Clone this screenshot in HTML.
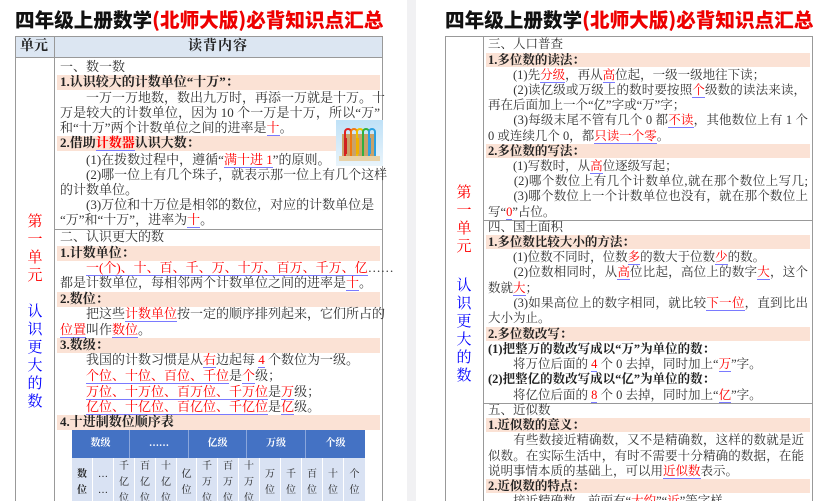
<!DOCTYPE html>
<html><head><meta charset="utf-8"><style>
*{margin:0;padding:0;box-sizing:border-box}
body{width:830px;height:501px;overflow:hidden;background:#fff;font-family:"Liberation Serif","Noto Serif CJK SC","Noto Sans CJK SC",serif;color:#333;position:relative}
.pg{position:absolute;top:0;height:501px;background:#fff;overflow:hidden}
.t{position:absolute;font-family:"Noto Sans CJK SC",sans-serif;font-weight:900;font-size:19.6px;line-height:22px;white-space:nowrap;color:#111}
.t b{color:#e00;font-weight:900}
.l{position:absolute;white-space:nowrap}
.j{text-align:justify;text-align-last:justify}
.h{position:absolute;background:#fbe2d5}
.r{color:#f00;border-bottom:1px solid #7a7aff}
.k{font-weight:bold;color:#222}
.vb{position:absolute;background:#999}
.u{position:absolute;font-size:15px;line-height:18px;width:20px;text-align:center}
.L .l{font-size:13px;line-height:16px}
.R .l{font-size:12.5px;line-height:15.3px}
</style></head><body>
<div style="position:absolute;left:407px;top:0;width:9px;height:501px;background:#f1f1f3"></div>

<!-- LEFT PAGE -->
<div class="pg" style="left:0;width:407px">
<div class="t" style="left:15px;top:8px">四年级上册数学<b>(北师大版)必背知识点汇总</b></div>
<div style="position:absolute;left:15px;top:36px;width:368px;height:22px;background:#dce6f2;border:1px solid #999"></div>
<div class="vb" style="left:15px;top:36px;width:1px;height:465px"></div>
<div class="vb" style="left:54px;top:36px;width:1px;height:465px"></div>
<div class="vb" style="left:382px;top:36px;width:1px;height:465px"></div>
<div class="vb" style="left:55px;top:229px;width:327px;height:1px"></div>
<div class="l k" style="left:20px;top:38px;font-size:14px;line-height:18px">单元</div>
<div class="l k" style="left:188px;top:38px;font-size:14px;line-height:18px;letter-spacing:1px">读背内容</div>
<div class="u" style="left:25px;top:213px;color:#f00">第<br>一<br>单<br>元</div>
<div class="u" style="left:25px;top:303px;color:#00f">认<br>识<br>更<br>大<br>的<br>数</div>

<div class="h" style="left:57px;top:75px;width:323px;height:15px"></div>
<div class="h" style="left:57px;top:136px;width:280px;height:15px"></div>
<div class="h" style="left:57px;top:246px;width:323px;height:15px"></div>
<div class="h" style="left:57px;top:292px;width:323px;height:15px"></div>
<div class="h" style="left:57px;top:338px;width:323px;height:15px"></div>
<div class="h" style="left:57px;top:415px;width:323px;height:15px"></div>

<div class="L">
<div class="l" style="left:60px;top:59px">一、数一数</div>
<div class="l k" style="left:60px;top:74px">1.认识较大的计数单位“十万”：</div>
<div class="l j" style="left:60px;top:90px;width:320px">　　一万一万地数，数出九万时，再添一万就是十万。十</div>
<div class="l j" style="left:60px;top:105px;width:320px">万是较大的计数单位，因为 10 个一万是十万，所以“万”</div>
<div class="l" style="left:60px;top:120px">和“十万”两个计数单位之间的进率是<span class="r">十</span>。</div>
<div class="l k" style="left:60px;top:135px">2.借助<span class="r">计数器</span>认识大数：</div>
<div class="l" style="left:60px;top:152px">　　(1)在拨数过程中，遵循“<span class="r">满十进 1</span>”的原则。</div>
<div class="l j" style="left:60px;top:167px;width:320px">　　(2)哪一位上有几个珠子，就表示那一位上有几个这样</div>
<div class="l" style="left:60px;top:182px">的计数单位。</div>
<div class="l j" style="left:60px;top:197px;width:307px">　　(3)万位和十万位是相邻的数位，对应的计数单位是</div>
<div class="l" style="left:60px;top:212px">“万”和“十万”，进率为<span class="r">十</span>。</div>
<div class="l" style="left:60px;top:229px">二、认识更大的数</div>
<div class="l k" style="left:60px;top:245px">1.计数单位：</div>
<div class="l" style="left:60px;top:260px">　　<span class="r">一(个)、十、百、千、万、十万、百万、千万、亿</span>……</div>
<div class="l" style="left:60px;top:275px">都是计数单位，每相邻两个计数单位之间的进率是<span class="r">十</span>。</div>
<div class="l k" style="left:60px;top:291px">2.数位：</div>
<div class="l j" style="left:60px;top:306px;width:315px">　　把这些<span class="r">计数单位</span>按一定的顺序排列起来，它们所占的</div>
<div class="l" style="left:60px;top:322px"><span class="r">位置</span>叫作<span class="r">数位</span>。</div>
<div class="l k" style="left:60px;top:337px">3.数级：</div>
<div class="l" style="left:60px;top:352px">　　我国的计数习惯是从<span class="r">右</span>边起每 <span class="r">4</span> 个数位为一级。</div>
<div class="l" style="left:60px;top:368px">　　<span class="r">个位、十位、百位、千位</span>是<span class="r">个</span>级；</div>
<div class="l" style="left:60px;top:384px">　　<span class="r">万位、十万位、百万位、千万位</span>是<span class="r">万</span>级；</div>
<div class="l" style="left:60px;top:399px">　　<span class="r">亿位、十亿位、百亿位、千亿位</span>是<span class="r">亿</span>级。</div>
<div class="l k" style="left:60px;top:414px">4.十进制数位顺序表</div>
</div>

<!-- abacus -->
<div style="position:absolute;left:336px;top:120px;width:47px;height:46px;background:linear-gradient(#bfe1f7,#e9f4fb)">
 <svg width="47" height="46" viewBox="0 0 47 46">
  <rect x="6" y="14" width="34" height="22" fill="#c9a26a"/>
  <g fill="none" stroke-width="2">
   <path d="M9 36V12a3 3 0 0 1 6 0v24" stroke="#e02020"/>
   <path d="M15 36V12a3 3 0 0 1 6 0v24" stroke="#f07a10"/>
   <path d="M21 36V12a3 3 0 0 1 6 0v24" stroke="#f0c000"/>
   <path d="M27 36V12a3 3 0 0 1 6 0v24" stroke="#30b040"/>
   <path d="M33 36V12a3 3 0 0 1 6 0v24" stroke="#2aa0e0"/>
  </g>
  <rect x="8" y="18" width="3" height="16" fill="#d02020"/>
  <rect x="20" y="18" width="3" height="16" fill="#f0b000"/>
  <rect x="32" y="18" width="3" height="16" fill="#30a0e0"/>
  <rect x="3" y="36" width="41" height="5" fill="#e8d2a8"/>
 </svg>
</div>

<!-- digit table -->
<div style="position:absolute;left:72px;top:430px;width:293px;height:28px;background:#4472c4;display:flex;color:#fff;font-size:10px;font-weight:bold">
 <div style="width:58px;border-right:1px solid #8aa6dc;text-align:center;line-height:28px">数级</div>
 <div style="width:59px;border-right:1px solid #8aa6dc;text-align:center;line-height:28px">……</div>
 <div style="width:58px;border-right:1px solid #8aa6dc;text-align:center;line-height:28px">亿级</div>
 <div style="width:59px;border-right:1px solid #8aa6dc;text-align:center;line-height:28px">万级</div>
 <div style="width:59px;text-align:center;line-height:28px">个级</div>
</div>
<div style="position:absolute;left:72px;top:458px;width:293px;height:43px;background:#d9e2f3;display:flex;font-size:10px;line-height:16px;color:#222">
 <div style="width:21px;border-right:1px solid #fff;text-align:center;padding-top:9px;font-weight:bold">数<br>位</div>
 <div style="width:21px;border-right:1px solid #fff;text-align:center;padding-top:9px">…<br>…</div>
 <div style="width:21px;border-right:1px solid #fff;text-align:center;padding-top:1px">千<br>亿<br>位</div>
 <div style="width:21px;border-right:1px solid #fff;text-align:center;padding-top:1px">百<br>亿<br>位</div>
 <div style="width:21px;border-right:1px solid #fff;text-align:center;padding-top:1px">十<br>亿<br>位</div>
 <div style="width:20px;border-right:1px solid #fff;text-align:center;padding-top:9px">亿<br>位</div>
 <div style="width:21px;border-right:1px solid #fff;text-align:center;padding-top:1px">千<br>万<br>位</div>
 <div style="width:21px;border-right:1px solid #fff;text-align:center;padding-top:1px">百<br>万<br>位</div>
 <div style="width:21px;border-right:1px solid #fff;text-align:center;padding-top:1px">十<br>万<br>位</div>
 <div style="width:21px;border-right:1px solid #fff;text-align:center;padding-top:9px">万<br>位</div>
 <div style="width:21px;border-right:1px solid #fff;text-align:center;padding-top:9px">千<br>位</div>
 <div style="width:21px;border-right:1px solid #fff;text-align:center;padding-top:9px">百<br>位</div>
 <div style="width:21px;border-right:1px solid #fff;text-align:center;padding-top:9px">十<br>位</div>
 <div style="width:21px;text-align:center;padding-top:9px">个<br>位</div>
</div>
</div>

<!-- RIGHT PAGE -->
<div class="pg" style="left:416px;width:414px">
<div class="t" style="left:29px;top:8px">四年级上册数学<b>(北师大版)必背知识点汇总</b></div>
<div class="vb" style="left:29px;top:36px;width:368px;height:1px"></div>
<div class="vb" style="left:29px;top:36px;width:1px;height:465px"></div>
<div class="vb" style="left:67px;top:36px;width:1px;height:465px"></div>
<div class="vb" style="left:396px;top:36px;width:1px;height:465px"></div>
<div class="vb" style="left:68px;top:220px;width:328px;height:1px"></div>
<div class="vb" style="left:68px;top:403px;width:328px;height:1px"></div>
<div class="u" style="left:38px;top:184px;color:#f00">第<br>一<br>单<br>元</div>
<div class="u" style="left:38px;top:277px;color:#00f">认<br>识<br>更<br>大<br>的<br>数</div>

<div class="h" style="left:70px;top:53px;width:324px;height:14px"></div>
<div class="h" style="left:70px;top:144px;width:324px;height:14px"></div>
<div class="h" style="left:70px;top:235px;width:324px;height:14px"></div>
<div class="h" style="left:70px;top:327px;width:324px;height:14px"></div>
<div class="h" style="left:70px;top:418px;width:324px;height:14px"></div>
<div class="h" style="left:70px;top:479px;width:324px;height:14px"></div>

<div class="R">
<div class="l" style="left:72px;top:37px">三、人口普查</div>
<div class="l k" style="left:72px;top:53px">1.多位数的读法：</div>
<div class="l" style="left:72px;top:68px">　　(1)先<span class="r">分级</span>，再从<span class="r">高</span>位起，一级一级地往下读；</div>
<div class="l j" style="left:72px;top:83px;width:318px">　　(2)读亿级或万级上的数时要按照<span class="r">个</span>级数的读法来读，</div>
<div class="l" style="left:72px;top:98px">再在后面加上一个“亿”字或“万”字；</div>
<div class="l j" style="left:72px;top:113px;width:320px">　　(3)每级末尾不管有几个 0 都<span class="r">不读</span>，其他数位上有 1 个</div>
<div class="l" style="left:72px;top:129px">0 或连续几个 0，都<span class="r">只读一个零</span>。</div>
<div class="l k" style="left:72px;top:144px">2.多位数的写法：</div>
<div class="l" style="left:72px;top:159px">　　(1)写数时，从<span class="r">高</span>位逐级写起；</div>
<div class="l j" style="left:72px;top:174px;width:320px">　　(2)哪个数位上有几个计数单位,就在那个数位上写几;</div>
<div class="l j" style="left:72px;top:189px;width:320px">　　(3)哪个数位上一个计数单位也没有，就在那个数位上</div>
<div class="l" style="left:72px;top:205px">写“<span class="r">0</span>”占位。</div>
<div class="l" style="left:72px;top:220px">四、国土面积</div>
<div class="l k" style="left:72px;top:235px">1.多位数比较大小的方法：</div>
<div class="l" style="left:72px;top:250px">　　(1)位数不同时，位数<span class="r">多</span>的数大于位数<span class="r">少</span>的数。</div>
<div class="l j" style="left:72px;top:265px;width:320px">　　(2)位数相同时，从<span class="r">高</span>位比起，高位上的数字<span class="r">大</span>，这个</div>
<div class="l" style="left:72px;top:281px">数就<span class="r">大</span>；</div>
<div class="l j" style="left:72px;top:296px;width:320px">　　(3)如果高位上的数字相同，就比较<span class="r">下一位</span>，直到比出</div>
<div class="l" style="left:72px;top:311px">大小为止。</div>
<div class="l k" style="left:72px;top:327px">2.多位数改写：</div>
<div class="l k" style="left:72px;top:342px">(1)把整万的数改写成以“万”为单位的数：</div>
<div class="l" style="left:72px;top:357px">　　将万位后面的 <span class="r">4</span> 个 0 去掉，同时加上“<span class="r">万</span>”字。</div>
<div class="l k" style="left:72px;top:372px">(2)把整亿的数改写成以“亿”为单位的数：</div>
<div class="l" style="left:72px;top:388px">　　将亿位后面的 <span class="r">8</span> 个 0 去掉，同时加上“<span class="r">亿</span>”字。</div>
<div class="l" style="left:72px;top:403px">五、近似数</div>
<div class="l k" style="left:72px;top:418px">1.近似数的意义：</div>
<div class="l j" style="left:72px;top:433px;width:316px">　　有些数接近精确数，又不是精确数，这样的数就是近</div>
<div class="l j" style="left:72px;top:449px;width:316px">似数。在实际生活中，有时不需要十分精确的数据，在能</div>
<div class="l" style="left:72px;top:464px">说明事情本质的基础上，可以用<span class="r">近似数</span>表示。</div>
<div class="l k" style="left:72px;top:479px">2.近似数的特点：</div>
<div class="l" style="left:72px;top:494px">　　接近精确数，前面有“<span class="r">大约</span>”“<span class="r">近</span>”等字样。</div>
</div>
</div>
</body></html>
